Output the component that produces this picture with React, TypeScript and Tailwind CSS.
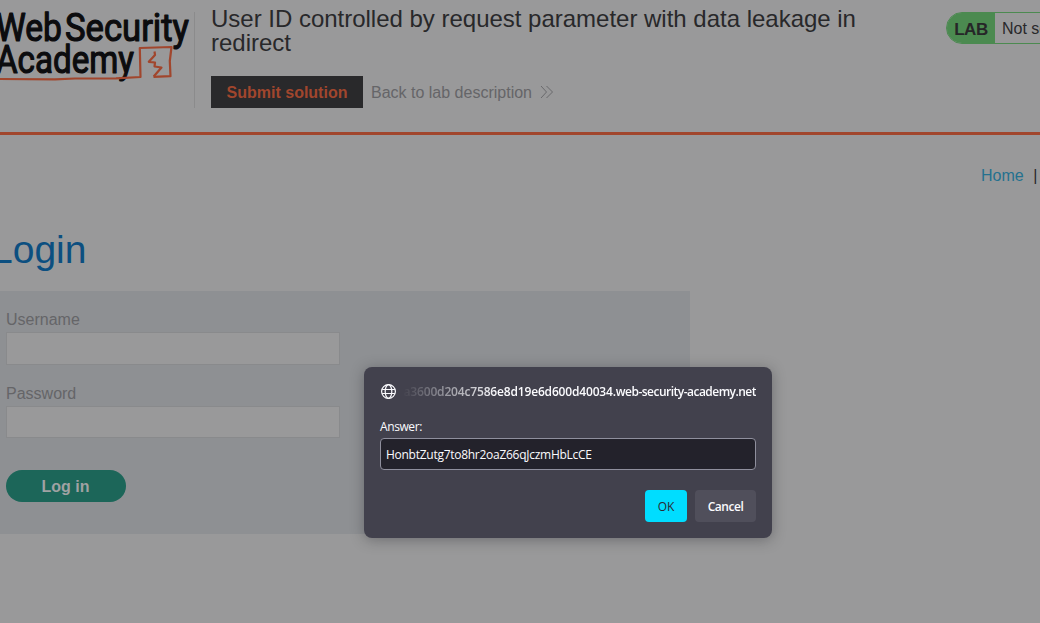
import React from "react";

function AcademyLogo() {
  return (
    <svg className="block h-[100px] w-[194px] shrink-0" viewBox="0 0 194 100" fill="none">
      <g fill="#0c0c0e" stroke="#0c0c0e" strokeWidth="1.2" strokeLinejoin="round" fontFamily="Roboto, sans-serif" fontSize="38" fontWeight="400">
        <text x="-4" y="40.5" textLength="66" lengthAdjust="spacingAndGlyphs">Web</text>
        <text x="65" y="40.5" textLength="124" lengthAdjust="spacingAndGlyphs">Security</text>
        <text x="-4" y="72.7" textLength="138" lengthAdjust="spacingAndGlyphs">Academy</text>
      </g>
      <g stroke="#a1462d" strokeWidth="2.2" strokeLinejoin="round">
        <path d="M0 79 L55 79.3 L75 78.5 L116 78.3 L140.5 77 L139.8 48 L171.5 47 L169.8 61 L170.5 76.2 L153.5 76.8" />
        <path d="M154.5 51.5 L155 55 L148.8 61.8 L155 62.5 L154.5 66.5 L161.5 67.5 L153.7 76.5" />
      </g>
    </svg>
  );
}

function LabHeader() {
  return (
    <header className="flex h-[135px] border-b-[3px] border-[#a1462d]">
      <AcademyLogo />
      <div className="mt-3 h-24 w-px shrink-0 bg-[#8b8b8c]" />
      <div className="ml-4 w-[690px] shrink-0 pt-[7px]">
        <h2 className="whitespace-nowrap text-[24px] leading-6 tracking-[-0.012px] text-[#28282a]">
          User ID controlled by request parameter with data leakage in
          <br />
          redirect
        </h2>
        <div className="mt-[21px] flex h-8 items-center">
          <button className="h-8 w-[152px] bg-[#29292b] pt-0.5 text-base font-bold text-[#a1462d]">Submit solution</button>
          <a className="ml-2 flex items-center pt-0.5 text-base text-[#656568]">
            Back to lab description
            <svg className="-mt-0.5 ml-2 h-3.5 w-[14px]" viewBox="0 0 14 14" fill="none" stroke="#69696c" strokeWidth="1">
              <path d="M1 1 L6.5 7 L1 13 M6.5 1 L12.5 7 L6.5 13" />
            </svg>
          </a>
        </div>
      </div>
      <div className="ml-[45px] mt-3 flex h-8 w-40 shrink-0 overflow-hidden rounded-l-2xl border border-[#4b8a50]">
        <span className="flex w-12 shrink-0 items-center justify-center bg-[#4b8a50] pt-[3px] text-[17px] font-bold tracking-[-0.4px] text-[#262628]">LAB</span>
        <span className="whitespace-nowrap pl-[7px] pt-1 text-base text-[#28282a]">Not solved</span>
      </div>
    </header>
  );
}

function Field({ label, box }: { label: string; box: string }) {
  return (
    <label className="block text-base leading-[25px] text-[#656568]">
      {label}
      <input className={box} />
    </label>
  );
}

function LoginForm() {
  return (
    <section>
      <h1 className="-ml-[9px] mt-[38px] text-[39px] leading-[51px] text-[#0c4f80]">Login</h1>
      <form className="mt-4 h-[243px] w-[690px] bg-[#8e9093] pl-1.5 pt-4">
        <Field label="Username" box="block h-[33px] w-[334px] border border-[#898a8c] bg-[#99999a]" />
        <div className="h-4" />
        <Field label="Password" box="block h-8 w-[334px] border border-[#898a8c] bg-[#99999a]" />
        <button type="button" className="mt-8 block h-8 w-[120px] rounded-full bg-[#1c6659] pr-px pt-0.5 text-base font-bold text-[#a0a2a3]">
          Log in
        </button>
      </form>
    </section>
  );
}

function PromptDialog() {
  return (
    <div
      role="dialog"
      className="absolute left-[364px] top-[367px] flex h-[171px] w-[408px] flex-col rounded-lg bg-[#42414d] px-4 font-['Open_Sans',sans-serif] text-[12px] text-[#fbfbfe] shadow-[0_2px_14px_rgba(30,30,35,0.35)]"
    >
      <div className="mt-4 flex h-4 items-center">
        <svg className="h-4 w-4 shrink-0" viewBox="0 0 16 16" fill="none" stroke="#fbfbfe" strokeWidth="1.2">
          <circle cx="8.5" cy="8.5" r="6.9" />
          <ellipse cx="8.5" cy="8.5" rx="3.3" ry="6.9" />
          <path d="M2.1 6.5 H14.9 M2.1 10.5 H14.9" />
        </svg>
        <div className="ml-1.5 flex h-5 flex-1 items-center justify-end overflow-hidden whitespace-nowrap pt-0.5 font-semibold [mask-image:linear-gradient(to_right,transparent,black_96px)]">
          <span className="tracking-[-0.17px]">0a3600d204c7586e8d19e6d600d40034.</span>
          <span className="tracking-[-0.52px]">web-security-academy.net</span>
        </div>
      </div>
      <label className="mt-[19px] h-5 leading-[18px] tracking-[-0.4px]">Answer:</label>
      <input
        readOnly
        value="HonbtZutg7to8hr2oaZ66qJczmHbLcCE"
        className="h-8 w-full rounded border border-[#8f8f9d] bg-[#23222b] px-[5px] tracking-[-0.27px]"
      />
      <div className="mt-5 flex justify-end gap-2">
        <button className="h-8 w-[42px] rounded bg-[#00ddff] pt-px text-[#2b2a33]">OK</button>
        <button className="h-8 w-[61px] rounded bg-[#504f5b] pt-px font-semibold tracking-[-0.45px]">Cancel</button>
      </div>
    </div>
  );
}

export default function App() {
  return (
    <main className="relative h-[623px] w-[1040px] overflow-hidden bg-[#99999a] font-['Liberation_Sans',Arial,sans-serif]">
      <LabHeader />
      <nav className="flex h-[51px] items-start gap-[9.5px] whitespace-nowrap pl-[981px] pt-[29px] text-base text-[#24718f]">
        <a>Home</a>
        <span className="text-[#28282a]">|</span>
      </nav>
      <LoginForm />
      <PromptDialog />
    </main>
  );
}
